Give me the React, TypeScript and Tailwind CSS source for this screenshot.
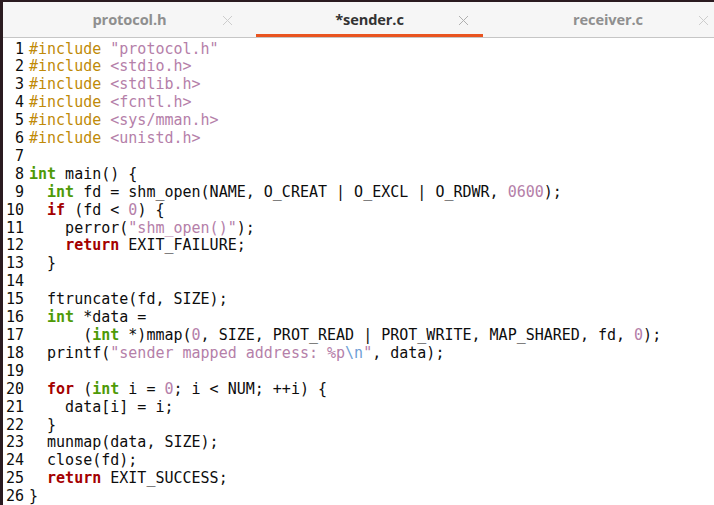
type Kind = "p" | "s" | "n" | "k" | "t" | "e" | "";
type Tok = [string, Kind] | string;

const KIND_CLASS: Record<string, string> = {
  p: "text-[#c08a08]",
  s: "text-[#b580a9]",
  n: "text-[#b580a9]",
  e: "text-[#6f9fd6]",
  k: "text-[#a40000] font-bold",
  t: "text-[#4e9a06] font-bold",
};

const LINES: Tok[][] = [
  [["#include ", "p"], ['"protocol.h"', "s"]],
  [["#include ", "p"], ["<stdio.h>", "s"]],
  [["#include ", "p"], ["<stdlib.h>", "s"]],
  [["#include ", "p"], ["<fcntl.h>", "s"]],
  [["#include ", "p"], ["<sys/mman.h>", "s"]],
  [["#include ", "p"], ["<unistd.h>", "s"]],
  [],
  [["int", "t"], " main() {"],
  ["  ", ["int", "t"], " fd = shm_open(NAME, O_CREAT | O_EXCL | O_RDWR, ", ["0600", "n"], ");"],
  ["  ", ["if", "k"], " (fd < ", ["0", "n"], ") {"],
  ["    perror(", ['"shm_open()"', "s"], ");"],
  ["    ", ["return", "k"], " EXIT_FAILURE;"],
  ["  }"],
  [],
  ["  ftruncate(fd, SIZE);"],
  ["  ", ["int", "t"], " *data ="],
  [
    "      (",
    ["int", "t"],
    " *)mmap(",
    ["0", "n"],
    ", SIZE, PROT_READ | PROT_WRITE, MAP_SHARED, fd, ",
    ["0", "n"],
    ");",
  ],
  ["  printf(", ['"sender mapped address: %p', "s"], ["\\n", "e"], ['"', "s"], ", data);"],
  [],
  ["  ", ["for", "k"], " (", ["int", "t"], " i = ", ["0", "n"], "; i < NUM; ++i) {"],
  ["    data[i] = i;"],
  ["  }"],
  ["  munmap(data, SIZE);"],
  ["  close(fd);"],
  ["  ", ["return", "k"], " EXIT_SUCCESS;"],
  ["}"],
];

const CloseIcon = ({ color }: { color: string }) => (
  <svg width="11" height="11" viewBox="0 0 11 11" className="shrink-0">
    <path d="M1 1 L10 10 M10 1 L1 10" stroke={color} strokeWidth="1" />
  </svg>
);

const Tab = ({
  label,
  active,
  width,
  closeRight,
  pad,
}: {
  label: string;
  active?: boolean;
  width: string;
  closeRight: string;
  pad?: string;
}) => (
  <div className={`relative flex h-full items-center justify-center ${width} ${pad ?? ""}`}>
    <span
      className={`text-[14.6px] font-bold tracking-[-0.1px] ${active ? "text-[#333333]" : "text-[#8f8f8f]"}`}
      style={{ fontFamily: '"Open Sans", "Noto Sans", sans-serif' }}
    >
      {label}
    </span>
    <span className={`absolute top-[13px] ${closeRight}`}>
      <CloseIcon color={active ? "#b0b0b0" : "#cdcdcd"} />
    </span>
    {active && <div className="absolute bottom-0 left-0 right-0 h-[3px] bg-[#e95420]" />}
  </div>
);

export default function App() {
  return (
    <div className="h-[505px] w-[714px] overflow-hidden bg-[#2a1b20] pt-[2px] pl-[3px]">
      <div className="flex h-full flex-col bg-white">
        {/* Tab bar */}
        <div className="flex h-[36px] shrink-0 border-b border-[#c6c6c6] bg-[#f6f6f6]">
          <Tab label="protocol.h" width="w-[253px]" closeRight="right-[23px]" />
          <Tab label="*sender.c" active width="w-[227px]" closeRight="right-[14px]" />
          <Tab label="receiver.c" width="w-[231px]" closeRight="right-[5px]" pad="pl-[19px]" />
        </div>

        {/* Code */}
        <div
          className="flex-1 pt-[2.5px] text-[15px] leading-[17.92px] text-[#0d0d0d]"
          style={{ fontFamily: '"DejaVu Sans Mono", monospace' }}
        >
          {LINES.map((line, i) => (
            <div key={i} className="flex h-[17.92px]">
              <span className="ml-[3px] w-[18px] text-right">{i + 1}</span>
              <span className="ml-[5px] whitespace-pre">
                {line.map((tok, j) =>
                  typeof tok === "string" ? (
                    <span key={j}>{tok}</span>
                  ) : (
                    <span key={j} className={KIND_CLASS[tok[1]]}>
                      {tok[0]}
                    </span>
                  )
                )}
              </span>
            </div>
          ))}
        </div>
      </div>
    </div>
  );
}
